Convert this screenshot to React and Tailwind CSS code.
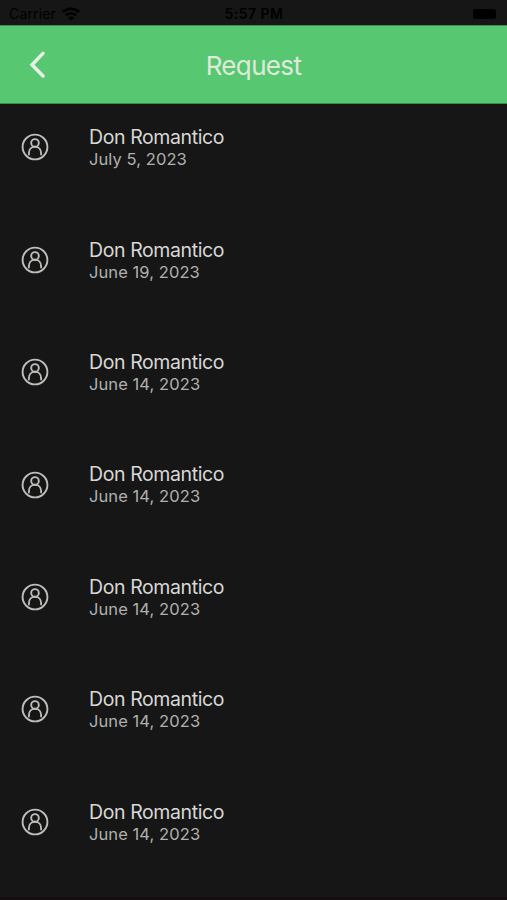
const requests = [
  { id: 1, name: 'Don Romantico', date: 'July 5, 2023' },
  { id: 2, name: 'Don Romantico', date: 'June 19, 2023' },
  { id: 3, name: 'Don Romantico', date: 'June 14, 2023' },
  { id: 4, name: 'Don Romantico', date: 'June 14, 2023' },
  { id: 5, name: 'Don Romantico', date: 'June 14, 2023' },
  { id: 6, name: 'Don Romantico', date: 'June 14, 2023' },
  { id: 7, name: 'Don Romantico', date: 'June 14, 2023' },
]

const WifiIcon = () => (
  <svg viewBox="0 0 18 14" className="w-[18px] h-[14px]" fill="none" stroke="#000" strokeWidth="2.6">
    <path d="M1 5a11.5 11.5 0 0 1 16 0" />
    <path d="M3.9 8.4a7.2 7.2 0 0 1 10.2 0" />
    <path d="M9 13.8 6 10.8a4.2 4.2 0 0 1 6 0Z" fill="#000" stroke="none" />
  </svg>
)

const BackIcon = () => (
  <svg viewBox="0 0 16 28" className="w-4 h-7" fill="none" stroke="#e9eee6" strokeWidth="3.5" strokeLinecap="round">
    <path d="M14 2.4 3 13.7 14 25" strokeLinejoin="miter" />
  </svg>
)

const PersonIcon = () => (
  <svg
    viewBox="0 0 28 28"
    className="w-7 h-7 shrink-0"
    fill="none"
    stroke="#bdbdba"
    strokeWidth="1.9"
    strokeLinecap="round"
  >
    <circle cx="14" cy="14" r="12.4" />
    <circle cx="14" cy="9.9" r="3.8" />
    <path d="M7.9 21.6v-1.4c0-3.8 2.4-6.4 6.1-6.4s6.1 2.6 6.1 6.4v1.4" />
  </svg>
)

const StatusBar = () => (
  <div className="grid grid-cols-3 items-center h-[25px] pt-[3px] pl-[9px] pr-[11px] text-black text-[14px] leading-none">
    <div className="flex items-center gap-[6px]">
      <span className="tracking-[0.15px]">Carrier</span>
      <WifiIcon />
    </div>
    <span className="pl-[3px] text-center font-semibold tracking-[0.5px] whitespace-nowrap">5:57 PM</span>
    <div className="flex justify-end">
      <div className="w-[23px] h-[10px] rounded-[2px] bg-black"></div>
    </div>
  </div>
)

const Header = () => (
  <header className="grid grid-cols-3 items-center h-[79px] px-[29px] bg-[#58c772] border-y border-[#3f8a50]">
    <button className="justify-self-start" aria-label="Back">
      <BackIcon />
    </button>
    <h1 className="pt-[2px] text-center text-[26px] leading-none tracking-[-0.65px] text-[#dfeadb]">Request</h1>
  </header>
)

const App = () => {
  return (
    <div className="flex flex-col h-[900px] overflow-hidden bg-[#161616] font-['Inter','Liberation_Sans',sans-serif]">
      <StatusBar />
      <Header />
      <ul className="flex-1 overflow-hidden">
        {requests.map((request) => (
          <li key={request.id} className="flex items-start h-[112.4px] pt-[22.3px] pl-[21px]">
            <div className="mt-[7.2px]">
              <PersonIcon />
            </div>
            <div className="ml-10">
              <p className="text-[19.5px] leading-[22px] tracking-[-0.4px] text-[#d8d8d5]">{request.name}</p>
              <p className="text-[16.5px] leading-[22px] tracking-[0.08px] text-[#b0b0ad]">{request.date}</p>
            </div>
          </li>
        ))}
      </ul>
      <div className="h-[3px] bg-[#140d10]"></div>
    </div>
  )
}

export default App
